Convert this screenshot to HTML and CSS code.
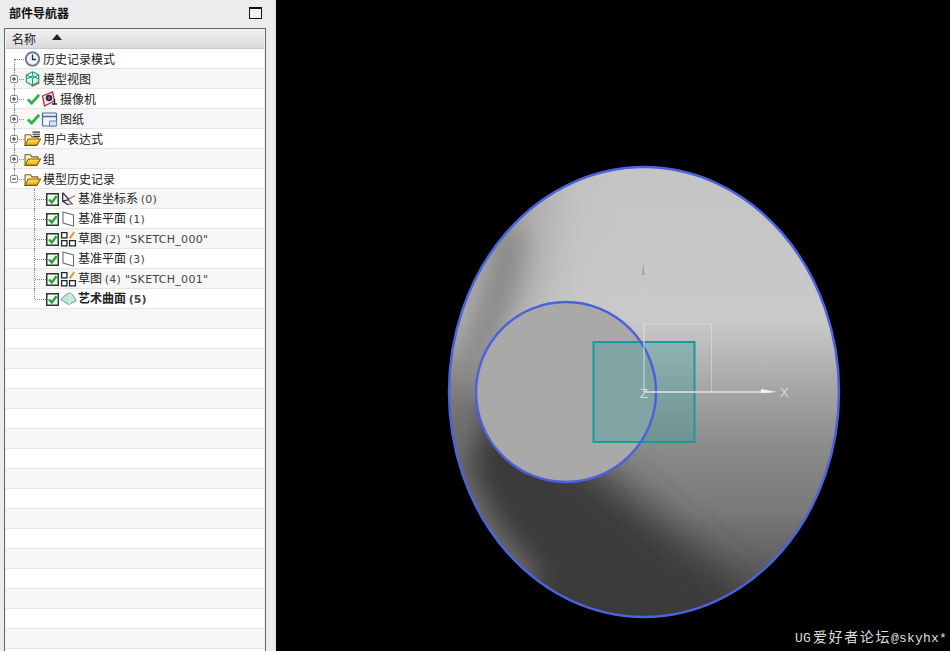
FILE: index.html
```html
<!DOCTYPE html>
<html lang="zh">
<head>
<meta charset="utf-8">
<title>部件导航器</title>
<link rel="stylesheet" href="styles.css">
</head>
<body>
<svg class="defs" width="0" height="0">
  <defs>
    <linearGradient id="fold" x1="0" y1="0" x2="0" y2="1"><stop offset="0" stop-color="#ffe566"/><stop offset="1" stop-color="#f0a400"/></linearGradient>
    <symbol id="plus" viewBox="0 0 8 8"><rect x=".5" y=".5" width="7" height="7" rx="1.500" fill="#fff" stroke="#8a8a8a"/><path d="M2 4h4M4 2v4" stroke="#333"/></symbol>
    <symbol id="minus" viewBox="0 0 8 8"><rect x=".5" y=".5" width="7" height="7" rx="1.500" fill="#fff" stroke="#8a8a8a"/><path d="M2 4h4" stroke="#333"/></symbol>
    <symbol id="clock" viewBox="0 0 16 16"><circle cx="8" cy="8" r="6.700" fill="#f0f4fa" stroke="#6d7d96" stroke-width="2"/><path d="M8 3.500V8.500h3.500" fill="none" stroke="#2a3040" stroke-width="1.300"/></symbol>
    <symbol id="cube" viewBox="0 0 16 16"><path d="M8 .8l6.200 3v7L8 14.500 1.800 11V4z" fill="#d8f2e8" stroke="#1f9a78" stroke-width="1.200"/><path d="M2 4l6 3 6-3M8 7v7M2 8l6-3 6 3M8 1v4" fill="none" stroke="#1f9a78"/><path d="M7 15.500l8-3.500" stroke="#d0563c" stroke-width="1.300"/></symbol>
    <symbol id="check" viewBox="0 0 14 12"><path d="M1 6.500l4 4L13 1.500" fill="none" stroke="#7fd08a" stroke-width="3.400"/><path d="M1 6.500l4 4L13 1.500" fill="none" stroke="#22b53a" stroke-width="2.200"/></symbol>
    <symbol id="camera" viewBox="0 0 16 16"><path d="M1 5l10-4 2 9-10 5z" fill="#f6e3e3" stroke="#c4283a" stroke-width="1.300"/><circle cx="7.500" cy="7" r="3.200" fill="#2b2f55"/><circle cx="7.500" cy="7" r="1.200" fill="#c05a8a"/><path d="M13 8v5M10.500 13h5" stroke="#222" stroke-width="1.300"/></symbol>
    <symbol id="sheet" viewBox="0 0 16 16"><rect x="1" y="2" width="14" height="13" rx="1" fill="#f2f5fb" stroke="#4a69a8" stroke-width="1.200"/><path d="M1.500 5.500h13" stroke="#4a69a8" stroke-width="1.600"/><path d="M8 15v-5h7v5z" fill="#d8dfee" stroke="#6f86b6"/></symbol>
    <symbol id="folder" viewBox="0 0 16 14"><path d="M1 13V3h5l1.500 2H13v2" fill="#fff6c8" stroke="#7c5a08"/><path d="M1 13l3-6h11.500L12 13z" fill="url(#fold)" stroke="#7c5a08"/></symbol>
    <symbol id="folder-lines" viewBox="0 0 16 14"><path d="M1 13V3h5l1.500 2H13v2" fill="#fff6c8" stroke="#7c5a08"/><path d="M1 13l3-6h11.500L12 13z" fill="url(#fold)" stroke="#7c5a08"/><path d="M8 .5h7M8 2.500h7M9 4.500h6" stroke="#2a2f3a"/></symbol>
    <symbol id="box" viewBox="0 0 13 13"><rect x=".75" y=".75" width="11.500" height="11.500" fill="#f4fbf4" stroke="#2b3a2b" stroke-width="1.500"/><path d="M3 6.500l2.800 3L10.500 3.300" fill="none" stroke="#1fa33a" stroke-width="2.400"/></symbol>
    <symbol id="datum" viewBox="0 0 16 14"><path d="M2.500 1v8l5 3.500M2.500 1l6 6.500M2.500 9l6-1.500" fill="none" stroke="#2c3144" stroke-width="1.200"/><path d="M8 7l6-3" stroke="#777"/><path d="M8 8l4 4" stroke="#a33" stroke-width="1.100"/><path d="M7 12.500l4-1" stroke="#555"/></symbol>
    <symbol id="plane" viewBox="0 0 14 16"><path d="M1.500 1l10.500 3v11l-10.500-3z" fill="#fff" stroke="#66707a" stroke-width="1.100"/></symbol>
    <symbol id="sketch" viewBox="0 0 16 15"><path d="M1.500 1.500h5v5h-5zM1.500 9h5v5h-5zM9 9h5.500v5H9z" fill="#fff" stroke="#1d2530" stroke-width="1.200"/><path d="M9 7l4.500-6" stroke="#d8a23a" stroke-width="2"/></symbol>
    <symbol id="surface" viewBox="0 0 17 14"><path d="M1 8c3-5 7-7 10-7 2 2 4 5 5 8-3 1-5 2-7 4-3-2-5-4-8-5z" fill="#bfe6d6" stroke="#6f9a90"/><path d="M9 13c1-3 1-7 2-12" fill="none" stroke="#e8f6f0"/></symbol>
  </defs>
</svg>
<div class="app">
  <aside class="nav">
    <header class="nav-head">
      <h1 class="nav-title">部件导航器</h1>
      <span class="max-btn"></span>
    </header>
    <section class="panel">
      <div class="col-head"><span>名称</span><i class="sort"></i></div>
      <div class="tree">
        <div class="row">
          <span class="twist stub-first"></span>
          <svg class="ico i16"><use href="#clock"/></svg><span class="label">历史记录模式</span>
        </div>
        <div class="row">
          <span class="twist trunk"><svg class="exp"><use href="#plus"/></svg></span>
          <svg class="ico i16"><use href="#cube"/></svg><span class="label">模型视图</span>
        </div>
        <div class="row">
          <span class="twist trunk"><svg class="exp"><use href="#plus"/></svg></span>
          <svg class="tick"><use href="#check"/></svg><svg class="ico i16"><use href="#camera"/></svg><span class="label">摄像机</span>
        </div>
        <div class="row">
          <span class="twist trunk"><svg class="exp"><use href="#plus"/></svg></span>
          <svg class="tick"><use href="#check"/></svg><svg class="ico i16"><use href="#sheet"/></svg><span class="label">图纸</span>
        </div>
        <div class="row">
          <span class="twist trunk"><svg class="exp"><use href="#plus"/></svg></span>
          <svg class="ico i16"><use href="#folder-lines"/></svg><span class="label">用户表达式</span>
        </div>
        <div class="row">
          <span class="twist trunk"><svg class="exp"><use href="#plus"/></svg></span>
          <svg class="ico i16"><use href="#folder"/></svg><span class="label">组</span>
        </div>
        <div class="row">
          <span class="twist trunk-end"><svg class="exp"><use href="#minus"/></svg></span>
          <svg class="ico i16"><use href="#folder"/></svg><span class="label">模型历史记录</span>
        </div>
        <div class="row child">
          <span class="branch"></span><svg class="cb"><use href="#box"/></svg><svg class="ico i16"><use href="#datum"/></svg><span class="label">基准坐标系 <em>(0)</em></span>
        </div>
        <div class="row child">
          <span class="branch"></span><svg class="cb"><use href="#box"/></svg><svg class="ico i16"><use href="#plane"/></svg><span class="label">基准平面 <em>(1)</em></span>
        </div>
        <div class="row child">
          <span class="branch"></span><svg class="cb"><use href="#box"/></svg><svg class="ico i16"><use href="#sketch"/></svg><span class="label">草图 <em>(2) "SKETCH_000"</em></span>
        </div>
        <div class="row child">
          <span class="branch"></span><svg class="cb"><use href="#box"/></svg><svg class="ico i16"><use href="#plane"/></svg><span class="label">基准平面 <em>(3)</em></span>
        </div>
        <div class="row child">
          <span class="branch"></span><svg class="cb"><use href="#box"/></svg><svg class="ico i16"><use href="#sketch"/></svg><span class="label">草图 <em>(4) "SKETCH_001"</em></span>
        </div>
        <div class="row child">
          <span class="branch last"></span><svg class="cb"><use href="#box"/></svg><svg class="ico i16"><use href="#surface"/></svg><span class="label strong">艺术曲面 <em>(5)</em></span>
        </div>
      </div>
    </section>
  </aside>
  <main class="viewport">
    <svg class="overlay" width="674" height="651" viewBox="276 0 674 651">
      <defs>
        <clipPath id="clipE"><ellipse cx="644" cy="392" rx="195" ry="225"/></clipPath>
        <linearGradient id="base" gradientUnits="userSpaceOnUse" x1="0" y1="167" x2="0" y2="617">
          <stop offset="0" stop-color="#c4c4c4"/>
          <stop offset=".34" stop-color="#c9c9c9"/>
          <stop offset=".5" stop-color="#a4a4a4"/>
          <stop offset=".62" stop-color="#8b8b8b"/>
          <stop offset=".76" stop-color="#7a7a7a"/>
          <stop offset=".9" stop-color="#5c5c5c"/>
          <stop offset="1" stop-color="#505050"/>
        </linearGradient>
        <filter id="b14" filterUnits="userSpaceOnUse" x="276" y="0" width="674" height="651"><feGaussianBlur stdDeviation="14"/></filter>
        <filter id="b20" filterUnits="userSpaceOnUse" x="276" y="0" width="674" height="651"><feGaussianBlur stdDeviation="20"/></filter>
        <filter id="b24" filterUnits="userSpaceOnUse" x="276" y="0" width="674" height="651"><feGaussianBlur stdDeviation="24"/></filter>
      </defs>
      <g clip-path="url(#clipE)">
        <rect x="440" y="160" width="410" height="470" fill="url(#base)"/>
        <path d="M400 140H560L545 300 400 430z" fill="#acacac" filter="url(#b24)"/>
        <path d="M592 462L800 640V680H400L430 400H500z" fill="#3a3a3a" filter="url(#b20)"/>
        <path d="M512 225C506 255 504 285 490 320S462 370 466 450" fill="none" stroke="#7c7c7c" stroke-width="24" filter="url(#b14)"/>
        <path d="M438 350C438 450 468 530 530 585" fill="none" stroke="#7c7c7c" stroke-width="26" filter="url(#b14)"/>
      </g>
      <ellipse cx="644" cy="392" rx="195" ry="225" fill="none" stroke="#4a62dc" stroke-width="2.500"/>
      <circle cx="566" cy="392" r="90" fill="#a9a9a9"/>
      <rect x="593.500" y="342" width="101" height="100" fill="#2f9a9a" fill-opacity=".32" stroke="#1b9a9c" stroke-width="2"/>
      <circle cx="566" cy="392" r="90" fill="none" stroke="#4a62dc" stroke-width="2.500"/>
      <path d="M644 392V324" stroke="#e8e8e8" stroke-opacity=".85"/>
      <path d="M644 324V258" stroke="#d8d8d8" stroke-opacity=".15"/>
      <path d="M644 324H711.500V392" fill="none" stroke="#e4e4e4" stroke-opacity=".55"/>
      <path d="M644 392H770" stroke="#e6e6e6" stroke-width="1.300"/>
      <path d="M761 389l16 3-16 1z" fill="#f4f4f4"/>
      <path d="M642 275l1.500-13 1 13z" fill="#a0a0a0"/>
      <text class="axis" x="780" y="397">X</text>
      <text class="axis" x="640" y="398">Z</text>
    </svg>
    <div class="mark">UG<span class="mark-cjk">爱好者论坛</span>@skyhx*</div>
  </main>
</div>
</body>
</html>
```
FILE: styles.css
```css
* { box-sizing: border-box; }
html, body { margin: 0; height: 100%; overflow: hidden; }
body { background: #000; font: 12px/20px "Noto Sans CJK SC", "Liberation Sans", sans-serif; color: #222; }
.defs { position: absolute; }
.app { display: flex; height: 651px; }

.nav { width: 276px; flex: none; background: #ececec; padding: 0 9px 0 4px; display: flex; flex-direction: column; border-right: 1px solid #e2e2e2; }
.nav-head { height: 28px; flex: none; display: flex; align-items: center; justify-content: space-between; padding: 0 4px 2px 5px; }
.nav-title { margin: 0; font-size: 12px; font-weight: 700; color: #111; }
.max-btn { width: 13px; height: 12px; border: 1px solid #111; border-top-width: 2px; background: #f2f2f2; }

.panel { flex: 1; min-height: 0; border: 1px solid #666; border-bottom: 0; padding: 0 1px; background: #f3f3f3; overflow: hidden; }
.col-head { height: 20px; display: flex; align-items: center; padding-left: 6px; background: linear-gradient(#f2f2f2, #dadada); border-bottom: 1px solid #c8c8c8; color: #222; }
.sort { width: 0; height: 0; margin-left: 16px; margin-bottom: 3px; border: 5px solid transparent; border-top: 0; border-bottom: 6px solid #222; }

.tree { height: 610px; background: repeating-linear-gradient(#fff 0 19px, #e6e6e6 19px 20px, #f6f6f6 20px 39px, #e6e6e6 39px 40px); }
.row { height: 20px; display: flex; align-items: center; }
.twist { width: 18px; height: 20px; flex: none; position: relative; display: flex; align-items: center; padding-left: 4px; }
.twist::before { content: ""; position: absolute; left: 8px; top: 0; bottom: 0; border-left: 1px dotted #888; }
.twist::after { content: ""; position: absolute; left: 8px; right: 0; top: 10px; border-top: 1px dotted #888; }
.stub-first::before { top: 10px; }
.trunk-end::before { bottom: 10px; }
.exp { width: 8px; height: 8px; position: relative; z-index: 1; }

.ico { flex: none; }
.i16 { width: 17px; height: 16px; }
.tick { width: 13px; height: 12px; flex: none; margin: 0 1px 0 3px; }
.label { margin-left: 2px; white-space: nowrap; line-height: 20px; }
.label em { font-style: normal; font-family: "DejaVu Sans", sans-serif; font-size: 11px; letter-spacing: .3px; color: #444; }
.strong { font-weight: 700; }
.strong em { font-weight: 700; letter-spacing: 0; }

.child { padding-left: 28px; }
.branch { width: 12px; height: 20px; flex: none; position: relative; border-left: 1px dotted #888; }
.branch::after { content: ""; position: absolute; left: 0; right: 0; top: 10px; border-top: 1px dotted #888; }
.branch.last { height: 10px; align-self: flex-start; }
.cb { width: 13px; height: 13px; flex: none; margin-right: 1px; }
.child .label { margin-left: 1px; }

.viewport { flex: 1; position: relative; background: #000; overflow: hidden; }
.overlay { position: absolute; left: 0; top: 0; }
.axis { font: 13px "Liberation Sans", sans-serif; fill: #d8d8d8; }
.mark { position: absolute; right: 3px; bottom: 4px; color: #ddd; font: 13px/16px "Liberation Mono", "Noto Sans CJK SC", monospace; letter-spacing: .2px; white-space: nowrap; }
.mark-cjk { font-family: "Noto Sans CJK SC", sans-serif; font-size: 14px; letter-spacing: 1.600px; margin-left: 2px; }
```
